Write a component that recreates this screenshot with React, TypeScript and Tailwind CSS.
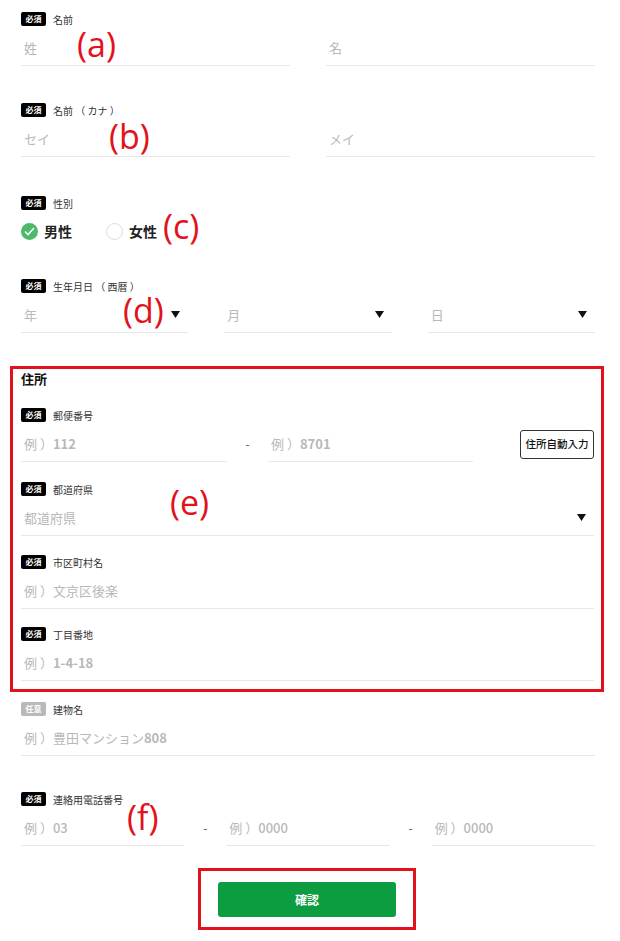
import React from 'react';

const Badge: React.FC<{ optional?: boolean }> = ({ optional }) => (
  <span
    className={`inline-flex h-[14px] w-[25px] items-center justify-center rounded-[2px] text-[8px] font-bold text-white ${
      optional ? 'bg-[#b9b9b9]' : 'bg-black'
    }`}
  >
    {optional ? '任意' : '必須'}
  </span>
);

const Label: React.FC<{ text: string; optional?: boolean }> = ({ text, optional }) => (
  <div className="flex h-[14px] items-center gap-[7px]">
    <Badge optional={optional} />
    <span className="text-[10px] text-[#333]">{text}</span>
  </div>
);

const Arrow = () => (
  <svg width="9" height="7" viewBox="0 0 9 7" className="shrink-0">
    <polygon points="0,0 9,0 4.5,7" fill="#111" />
  </svg>
);

const Input: React.FC<{ children: React.ReactNode; select?: boolean; className?: string }> = ({
  children,
  select,
  className = '',
}) => (
  <div
    className={`mt-[4px] flex h-[36px] items-center justify-between border-b border-[#e8e8e8] pl-[3px] pr-[8px] text-[13px] text-[#b8b8b8] ${className}`}
  >
    <span>{children}</span>
    {select && <Arrow />}
  </div>
);

const Dash: React.FC<{ className?: string }> = ({ className = '' }) => (
  <div className={`mt-[4px] flex h-[36px] items-center justify-center text-[12px] text-[#555] ${className}`}>-</div>
);

const Note: React.FC<{ text: string; className: string }> = ({ text, className }) => (
  <span
    className={`pointer-events-none absolute text-[34px] leading-none text-[#e3111c] ${className}`}
    style={{ fontFamily: '"Open Sans", "Liberation Sans", sans-serif' }}
  >
    {text}
  </span>
);

export default function App() {
  return (
    <div
      className="relative w-[620px] bg-white pb-[11px] pl-[21px] pr-[25px] pt-[12px]"
      style={{ fontFamily: '"Noto Sans CJK JP", "Noto Sans", sans-serif' }}
    >
      {/* 名前 */}
      <div>
        <Label text="名前" />
        <div className="grid grid-cols-2 gap-[36px]">
          <Input>姓</Input>
          <Input>名</Input>
        </div>
      </div>

      {/* 名前（カナ） */}
      <div className="mt-[37px]">
        <Label text="名前 （ カナ ）" />
        <div className="grid grid-cols-2 gap-[36px]">
          <Input>セイ</Input>
          <Input>メイ</Input>
        </div>
      </div>

      {/* 性別 */}
      <div className="mt-[39px]">
        <Label text="性別" />
        <div className="mt-[11px] flex h-[20px] items-center">
          <span className="flex h-[17px] w-[17px] items-center justify-center rounded-full bg-[#4cb96b]">
            <svg width="11" height="9" viewBox="0 0 11 9">
              <path d="M1 4.5 L4 7.5 L10 1" fill="none" stroke="#fff" strokeWidth="1.6" />
            </svg>
          </span>
          <span className="ml-[6px] text-[14px] font-bold text-[#222]">男性</span>
          <span className="ml-[34px] h-[17px] w-[17px] rounded-full border border-[#dcdcdc]" />
          <span className="ml-[6px] text-[14px] font-bold text-[#222]">女性</span>
        </div>
      </div>

      {/* 生年月日 */}
      <div className="mt-[38px]">
        <Label text="生年月日 （ 西暦 ）" />
        <div className="grid grid-cols-3 gap-[36px]">
          <Input select>年</Input>
          <Input select>月</Input>
          <Input select>日</Input>
        </div>
      </div>

      {/* 住所 */}
      <div className="-ml-[11px] -mr-[9px] mt-[33px] border-[3px] border-[#e3111c] pb-[8px] pl-[8px] pr-[7px] pt-[1px]">
        <div className="text-[13px] font-bold leading-[18px] text-[#111]">住所</div>

        <div className="mt-[20px]">
          <Label text="郵便番号" />
          <div className="flex items-center">
            <Input className="w-[206px]">
              例 ）<span className="font-semibold">112</span>
            </Input>
            <Dash className="w-[41px]" />
            <Input className="w-[205px]">
              例 ）<span className="font-semibold">8701</span>
            </Input>
            <div className="flex flex-1 justify-end pt-[4px]">
              <button className="h-[29px] w-[74px] rounded-[3px] border border-[#333] bg-white text-[10.5px] font-medium text-[#111]">
                住所自動入力
              </button>
            </div>
          </div>
        </div>

        <div className="mt-[20px]">
          <Label text="都道府県" />
          <Input select>都道府県</Input>
        </div>

        <div className="mt-[19px]">
          <Label text="市区町村名" />
          <Input>例 ）文京区後楽</Input>
        </div>

        <div className="mt-[18px]">
          <Label text="丁目番地" />
          <Input>
            例 ）<span className="font-semibold">1-4-18</span>
          </Input>
        </div>
      </div>

      {/* 建物名 */}
      <div className="mt-[10px]">
        <Label text="建物名" optional />
        <Input>
          例 ）豊田マンション<span className="font-semibold">808</span>
        </Input>
      </div>

      {/* 連絡用電話番号 */}
      <div className="mt-[36px]">
        <Label text="連絡用電話番号" />
        <div className="flex">
          <Input className="flex-1">
            例 ）<span className="font-medium">03</span>
          </Input>
          <Dash className="w-[42px]" />
          <Input className="flex-1">
            例 ）<span className="font-medium">0000</span>
          </Input>
          <Dash className="w-[42px]" />
          <Input className="flex-1">
            例 ）<span className="font-medium">0000</span>
          </Input>
        </div>
      </div>

      {/* 確認 */}
      <div className="mt-[22px] flex justify-center pr-[2px]">
        <div className="border-[3px] border-[#e3111c] px-[17px] pb-[10px] pt-[11px]">
          <button className="h-[35px] w-[178px] rounded-[3px] bg-[#0c9d40] text-[12px] font-bold text-white">
            確認
          </button>
        </div>
      </div>

      <Note text="(a)" className="left-[77px] top-[27px]" />
      <Note text="(b)" className="left-[109px] top-[119px]" />
      <Note text="(c)" className="left-[163px] top-[209px]" />
      <Note text="(d)" className="left-[123px] top-[293px]" />
      <Note text="(e)" className="left-[170px] top-[485px]" />
      <Note text="(f)" className="left-[127px] top-[800px]" />
    </div>
  );
}
